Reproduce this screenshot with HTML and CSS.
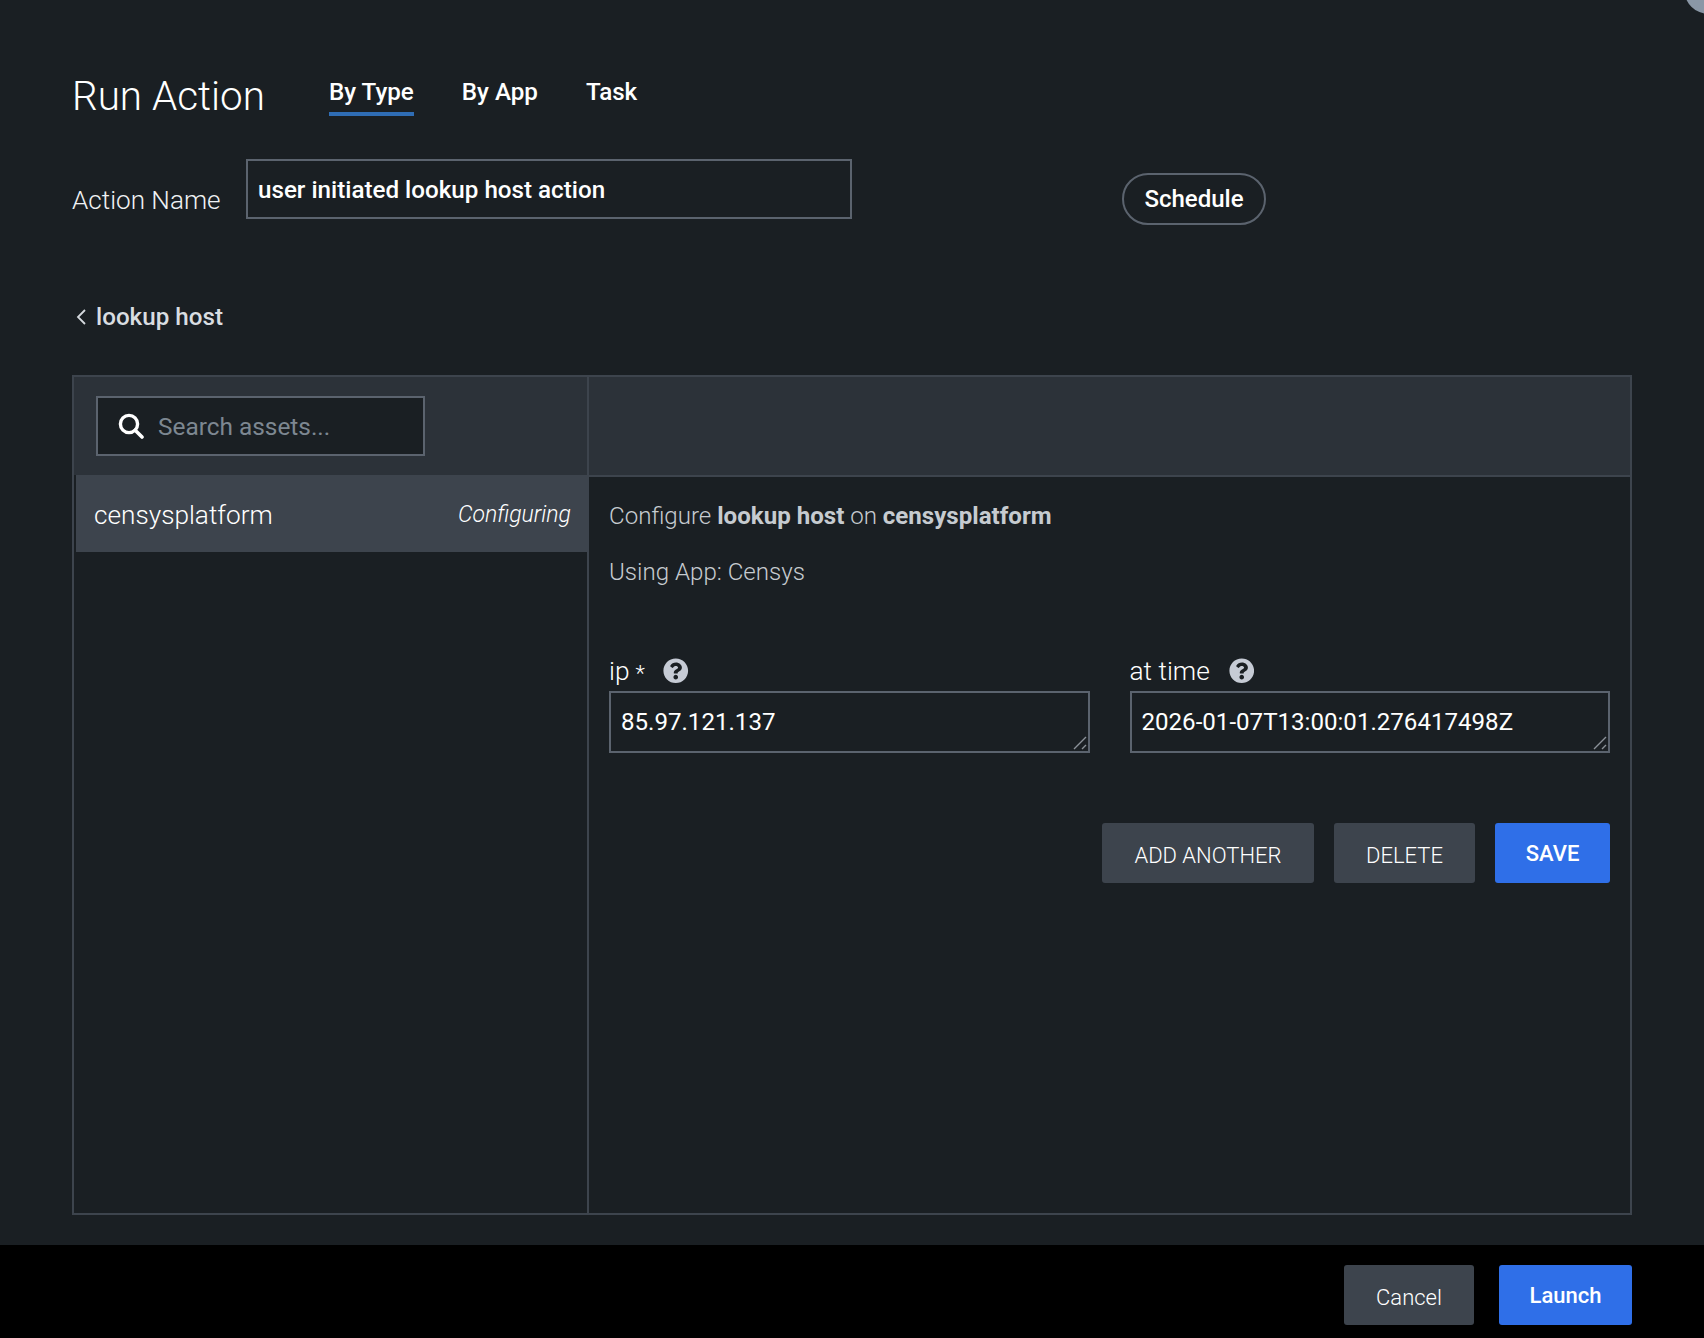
FILE: index.html
```html
<!DOCTYPE html>
<html lang="en">
<head>
<meta charset="utf-8">
<title>Run Action</title>
<link rel="stylesheet" href="styles.css">
</head>
<body>
<div class="corner"></div>
<div class="modal">
  <main class="main">
    <header class="title-row">
      <h1 class="title">Run Action</h1>
      <nav class="tabs">
        <a class="tab tab-active">By Type</a>
        <a class="tab">By App</a>
        <a class="tab">Task</a>
      </nav>
    </header>
    <div class="name-row">
      <label class="name-label">Action Name</label>
      <input class="name-input" type="text" value="user initiated lookup host action">
      <button class="schedule">Schedule</button>
    </div>
    <div class="back">
      <svg class="chevron" viewBox="0 0 13 16"><path d="M10 1 3 8l7 7" fill="none" stroke="#d5d9de" stroke-width="1.8"/></svg>
      <span>lookup host</span>
    </div>
    <section class="panel">
      <aside class="left">
        <div class="left-head">
          <div class="search">
            <svg class="search-icon" viewBox="0 0 26 26"><circle cx="11" cy="11" r="8.6" fill="none" stroke="#fff" stroke-width="3.4"/><path d="M17.2 17.2 24 24" stroke="#fff" stroke-width="3.6" stroke-linecap="round"/></svg>
            <span class="search-text">Search assets...</span>
          </div>
        </div>
        <div class="asset">
          <span class="asset-name">censysplatform</span>
          <em class="asset-state">Configuring</em>
        </div>
      </aside>
      <div class="right">
        <div class="right-head"></div>
        <div class="config">
          <p class="line">Configure <b>lookup host</b> on <b>censysplatform</b></p>
          <p class="line line-app">Using App: Censys</p>
          <div class="fields">
            <div class="field">
              <div class="field-label"><span>ip</span><span class="req">*</span>
                <svg class="help help-ip" viewBox="0 0 512 512"><path fill="#c6cbd5" d="M504 256c0 136.997-111.043 248-248 248S8 392.997 8 256C8 119.083 119.043 8 256 8s248 111.083 248 248zM262.655 90c-54.497 0-89.255 22.957-116.549 63.758-3.536 5.286-2.353 12.415 2.715 16.258l34.699 26.31c5.205 3.947 12.621 3.008 16.665-2.122 17.864-22.658 30.113-35.797 57.303-35.797 20.429 0 45.698 13.148 45.698 32.958 0 14.976-12.363 22.667-32.534 33.976C247.128 238.528 216 254.941 216 296v4c0 6.627 5.373 12 12 12h56c6.627 0 12-5.373 12-12v-1.333c0-28.462 83.186-29.647 83.186-106.667 0-58.002-60.165-102-116.531-102zM256 338c-25.365 0-46 20.635-46 46 0 25.364 20.635 46 46 46s46-20.636 46-46c0-25.365-20.635-46-46-46z"/></svg>
              </div>
              <div class="area-wrap">
                <textarea class="area" rows="1">85.97.121.137</textarea>
                <svg class="grip" viewBox="0 0 14 14"><path d="M1 13 13 1M9 13l4-4" stroke="#8b9198" stroke-width="1.4" fill="none"/></svg>
              </div>
            </div>
            <div class="field">
              <div class="field-label"><span>at time</span>
                <svg class="help help-time" viewBox="0 0 512 512"><path fill="#c6cbd5" d="M504 256c0 136.997-111.043 248-248 248S8 392.997 8 256C8 119.083 119.043 8 256 8s248 111.083 248 248zM262.655 90c-54.497 0-89.255 22.957-116.549 63.758-3.536 5.286-2.353 12.415 2.715 16.258l34.699 26.31c5.205 3.947 12.621 3.008 16.665-2.122 17.864-22.658 30.113-35.797 57.303-35.797 20.429 0 45.698 13.148 45.698 32.958 0 14.976-12.363 22.667-32.534 33.976C247.128 238.528 216 254.941 216 296v4c0 6.627 5.373 12 12 12h56c6.627 0 12-5.373 12-12v-1.333c0-28.462 83.186-29.647 83.186-106.667 0-58.002-60.165-102-116.531-102zM256 338c-25.365 0-46 20.635-46 46 0 25.364 20.635 46 46 46s46-20.636 46-46c0-25.365-20.635-46-46-46z"/></svg>
              </div>
              <div class="area-wrap">
                <textarea class="area" rows="1">2026-01-07T13:00:01.276417498Z</textarea>
                <svg class="grip" viewBox="0 0 14 14"><path d="M1 13 13 1M9 13l4-4" stroke="#8b9198" stroke-width="1.4" fill="none"/></svg>
              </div>
            </div>
          </div>
          <div class="actions">
            <button class="btn btn-add">ADD ANOTHER</button>
            <button class="btn btn-delete">DELETE</button>
            <button class="btn btn-save">SAVE</button>
          </div>
        </div>
      </div>
    </section>
  </main>
  <footer class="footer">
    <button class="btn btn-cancel">Cancel</button>
    <button class="btn btn-launch">Launch</button>
  </footer>
</div>
</body>
</html>
```
FILE: styles.css
```css
* { box-sizing: border-box; }
html, body { margin: 0; height: 100%; }
body {
  background: #1a1f23;
  color: #fff;
  font-family: Roboto, "Liberation Sans", sans-serif;
  overflow: hidden;
}
.corner {
  position: absolute;
  top: -36px;
  right: -30px;
  width: 50px;
  height: 50px;
  border-radius: 50%;
  background: #8a97a6;
}
.modal { display: flex; flex-direction: column; height: 1338px; }
.main { flex: 1; padding: 0 72px; display: flex; flex-direction: column; min-height: 0; }

.title-row { display: flex; align-items: flex-start; height: 159px; padding-top: 69px; }
.title { margin: 0; font-size: 40.4px; line-height: 56px; font-weight: 300; width: 257px; }
.tabs { display: flex; gap: 48px; margin-top: -1px; }
.tab { font-size: 24.2px; font-weight: 500; line-height: 32px; box-sizing: content-box; height: 32px; padding-top: 8px; padding-bottom: 4px; }
.tab-active { border-bottom: 4px solid #2f6db5; }

.name-row { display: flex; align-items: flex-start; height: 100px; }
.name-label { font-size: 26.1px; font-weight: 300; line-height: 32px; width: 174px; margin-top: 25px; color: #f0f2f4; }
.name-input {
  width: 606px;
  height: 60px;
  background: transparent;
  border: 2px solid #5b636e;
  padding: 2px 10px 0;
  color: #fff;
  font: 500 24.2px Roboto, sans-serif;
  outline: 0;
}
.schedule {
  margin: 14px 0 0 270px;
  width: 144px;
  height: 52px;
  border: 2px solid #5b636e;
  border-radius: 26px;
  background: transparent;
  color: #fff;
  font: 500 24px Roboto, sans-serif;
}

.back { display: flex; align-items: center; gap: 8px; height: 116px; padding: 0 0 0 3px; font-size: 24.2px; font-weight: 500; color: #d9dde1; }
.chevron { width: 13px; height: 16px; }

.panel { flex: none; width: 1560px; height: 840px; display: flex; border: 2px solid #3d444d; }
.left { width: 515px; border-right: 2px solid #3d444d; flex: none; }
.left-head { height: 98px; background: #2c3239; padding: 19px 22px; }
.search { width: 329px; height: 60px; background: #1a1f23; border: 2px solid #5b636e; display: flex; align-items: center; padding-left: 20px; }
.search-icon { width: 26px; height: 26px; }
.search-text { margin-left: 14px; font-size: 24.4px; color: #7d8791; }
.asset { height: 77px; margin-left: 2px; background: #3d444d; display: flex; align-items: center; justify-content: space-between; padding: 2px 16px 0 18px; }
.asset-name { font-size: 26.2px; font-weight: 300; }
.asset-state { font-size: 23px; font-weight: 300; }

.right { flex: 1; display: flex; flex-direction: column; min-width: 0; }
.right-head { height: 100px; background: #2c3239; border-bottom: 2px solid #3d444d; }
.config { padding: 0 20px; color: #c6cbd0; }
.line { margin: 0; font-size: 24.1px; font-weight: 300; line-height: 32px; padding-top: 23px; }
.line b { font-weight: 700; }
.line-app { padding-top: 24px; }
.fields { display: flex; gap: 40px; margin-top: 66px; }
.field { flex: 1; min-width: 0; }
.field-label { display: flex; align-items: center; height: 34px; margin-bottom: 3px; font-size: 26.3px; font-weight: 300; color: #fff; }
.req { font-size: 22px; margin-left: 6px; padding-top: 4px; }
.help { width: 25.5px; height: 25.5px; }
.help-ip { margin-left: 18.5px; }
.help-time { margin-left: 19px; }
.area-wrap { position: relative; }
.area {
  display: block;
  width: 100%;
  height: 62px;
  background: transparent;
  border: 2px solid #5b636e;
  color: #fff;
  font: 400 24.1px/30px Roboto, sans-serif;
  padding: 14px 10px 0;
  outline: 0;
  resize: none;
}
.grip { position: absolute; right: 3px; bottom: 3px; width: 14px; height: 14px; }
.actions { display: flex; justify-content: flex-end; gap: 20px; margin-top: 70px; }
.btn { height: 60px; border: 0; border-radius: 3px; color: #fff; font: 300 22px Roboto, sans-serif; }
.btn-add { width: 212px; background: #3d444d; padding-top: 5px; }
.btn-delete { width: 141px; background: #3d444d; padding-top: 5px; }
.btn-save { width: 115px; background: #2f6fe8; font-weight: 500; }

.footer { flex: none; height: 93px; background: #000; display: flex; justify-content: flex-end; gap: 25px; padding: 20px 72px 0 0; }
.btn-cancel { width: 130px; background: #3d444d; padding-top: 5px; }
.btn-launch { width: 133px; background: #2f6fe8; font-weight: 500; }
```
